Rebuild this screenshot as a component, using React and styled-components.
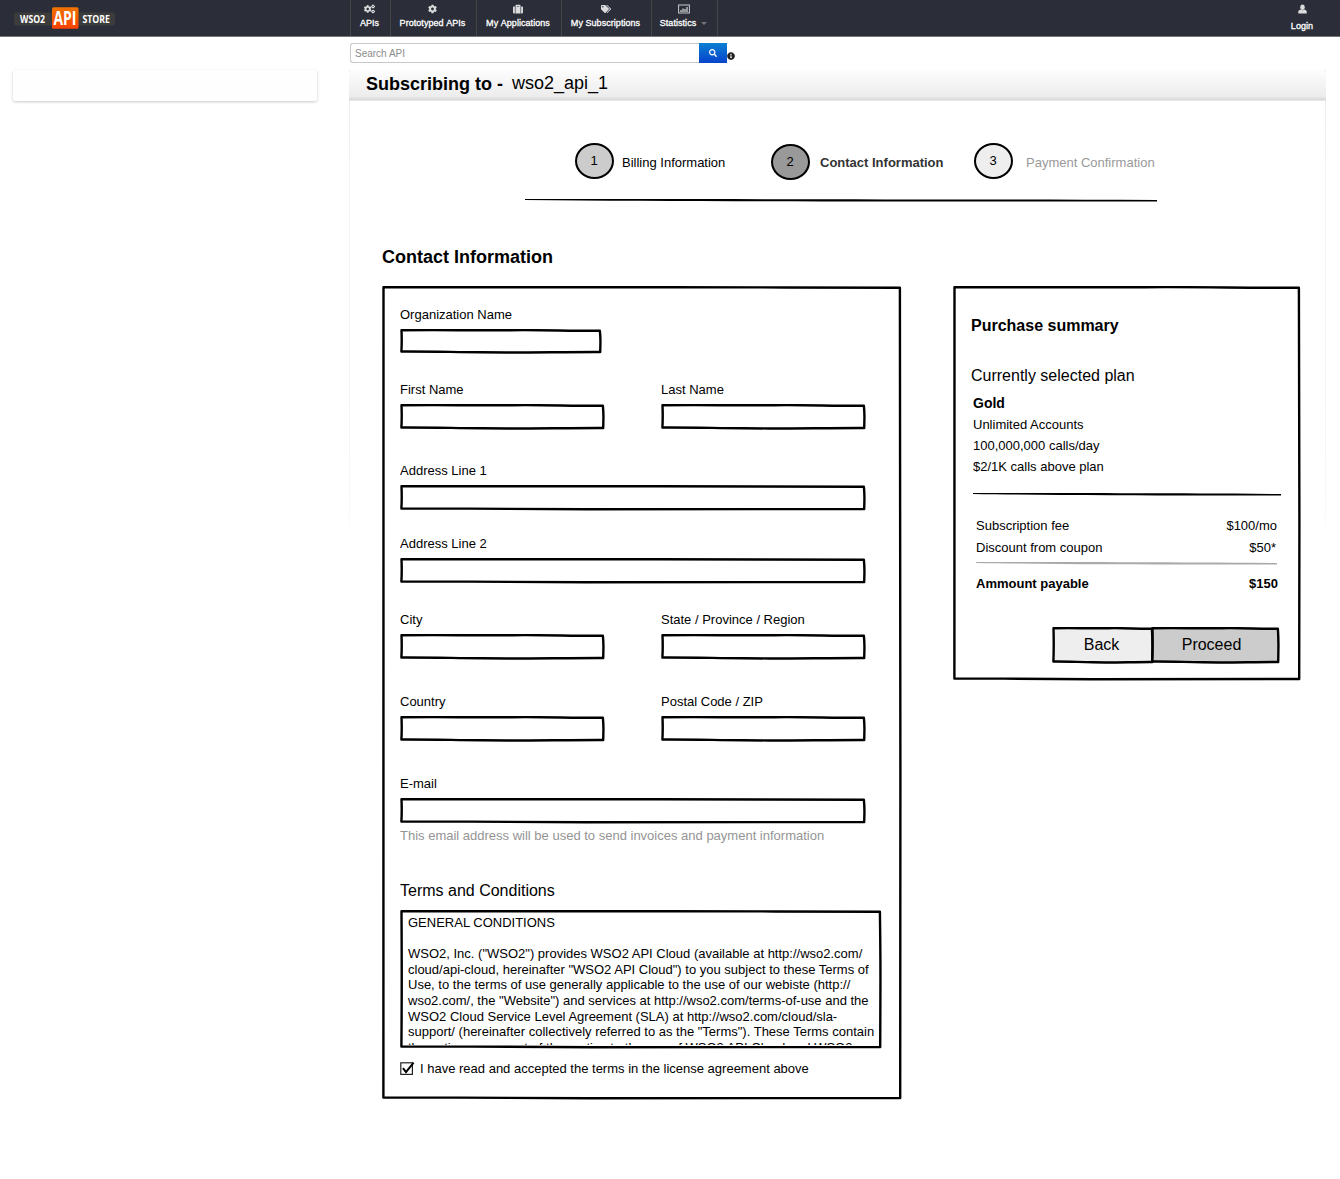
import React from "react";
import styled, { createGlobalStyle } from "styled-components";
import { FaCogs, FaCog, FaSuitcase, FaTags, FaSearch, FaInfoCircle } from "react-icons/fa";

const GlobalStyle = createGlobalStyle`
  * { box-sizing: border-box; }
  body {
    margin: 0;
    background: #fff;
    color: #000;
    font: 13px/16px "Liberation Sans", Arial, sans-serif;
  }
  p, h1, h2, h3 { margin: 0; font-weight: normal; }
`;

const Page = styled.div`
  width: 1340px;
  height: 1179px;
  overflow: hidden;
`;

/* ---------- header ---------- */

const Header = styled.header`
  display: flex;
  height: 37px;
  padding-left: 14px;
  background: #2b2e39;
  border-bottom: 1px solid #73757a;
  color: #fff;
`;

const LogoLink = styled.div`
  width: 336px;
  padding-top: 7px;
`;

const LogoSvg = styled.svg`
  display: block;
  overflow: visible;
  font-family: "Open Sans", "Noto Sans", sans-serif;
  font-weight: 700;
`;

const Nav = styled.nav`
  display: flex;
  flex: 1;
`;

const NavItem = styled.div`
  display: flex;
  flex-direction: column;
  align-items: center;
  width: ${(p) => p.$width}px;
  padding: 4px 2px 0 0;
  border-left: 1px solid ${(p) => (p.$plain ? "transparent" : "#454547")};
  color: #dcdcde;
  svg { height: 10px; }
`;

const NavLabel = styled.span`
  display: flex;
  align-items: center;
  gap: 5px;
  margin-top: ${(p) => p.$drop || 3}px;
  font-size: 9px;
  line-height: 12px;
  font-kerning: none;
  letter-spacing: 0.05px;
  white-space: nowrap;
  color: #fff;
  -webkit-text-stroke: 0.3px #fff;
`;

const Caret = styled.i`
  border: 3px solid transparent;
  border-top-color: #74767c;
  border-bottom: 0;
`;

/* ---------- body columns ---------- */

const Columns = styled.div`
  display: flex;
`;

const Sidebar = styled.aside`
  width: 349px;
  padding: 33px 0 0 13px;
`;

const EmptyCard = styled.div`
  width: 304px;
  height: 31px;
  border-radius: 2px;
  background: #fefefe;
  box-shadow: 0 1px 3px rgba(0, 0, 0, 0.22);
`;

const Main = styled.main`
  width: 977px;
  padding-top: 6px;
`;

const SearchBar = styled.div`
  display: flex;
  align-items: center;
  height: 20px;
  padding-left: 1px;
`;

const SearchInput = styled.input`
  width: 349px;
  height: 20px;
  padding: 0 4px;
  border: 1px solid #c8c8c8;
  border-right: 0;
  border-radius: 3px 0 0 3px;
  outline: 0;
  font: 10px "Liberation Sans", Arial, sans-serif;
  &::placeholder { color: #8c8c8c; opacity: 1; }
`;

const SearchButton = styled.button`
  display: flex;
  align-items: center;
  justify-content: center;
  width: 28px;
  height: 20px;
  padding: 0;
  border: 0;
  background: linear-gradient(#0a80d2, #0743cc);
  color: #fff;
`;

const InfoBadge = styled.span`
  display: flex;
  padding-top: 5px;
  color: #222;
`;

const Panel = styled.section`
  height: 1000px;
  margin-top: 7px;
  background:
    linear-gradient(#e9e9e9, #f3f3f3 20%, #f6f6f6 90%, #fff) 0 0 / 1px 475px no-repeat,
    linear-gradient(#e9e9e9, #f3f3f3 20%, #f6f6f6 90%, #fff) 100% 0 / 1px 475px no-repeat;
`;

const PanelTitle = styled.div`
  display: flex;
  align-items: baseline;
  height: 31px;
  padding: 3px 0 0 17px;
  border-radius: 3px 3px 0 0;
  background: linear-gradient(#fdfdfd, #ececec 85%, #dadada 94%, #e8e8e8);
`;

const Heading = styled.h1`
  font-size: 18px;
  line-height: 22px;
  font-weight: bold;
`;

const ApiName = styled.span`
  margin-left: 9px;
  font-size: 18px;
  line-height: 20px;
  position: relative;
  top: -1px;
`;

/* ---------- stepper ---------- */

const Steps = styled.div`
  display: flex;
  padding: 42px 0 0 226px;
  height: 98px;
`;

const Step = styled.div`
  display: flex;
  align-items: flex-start;
  width: ${(p) => p.$width}px;
  padding-top: ${(p) => p.$drop || 0}px;
`;

const StepCircle = styled.span`
  display: flex;
  align-items: center;
  justify-content: center;
  flex: none;
  width: 39px;
  height: 36px;
  padding-right: 1px;
  border: 2px solid #000;
  border-radius: 50%;
  background: ${(p) => p.$fill};
`;

const StepLabel = styled.span`
  margin: ${(p) => p.$top}px 0 0 ${(p) => p.$gap}px;
  color: ${(p) => p.$color};
  font-weight: ${(p) => (p.$bold ? "bold" : "normal")};
  white-space: nowrap;
`;

const StepRule = styled.div`
  padding-left: 176px;
  height: 3px;
`;

const SectionTitle = styled.h2`
  margin: 44px 0 0 33px;
  font-size: 18px;
  line-height: 22px;
  font-weight: bold;
`;

const Boards = styled.div`
  display: flex;
  align-items: flex-start;
  gap: 51px;
  padding: 18px 0 0 33px;
`;

/* ---------- hand drawn shapes ---------- */

const SketchBox = styled.div`
  position: relative;
  width: ${(p) => p.$w}px;
  height: ${(p) => p.$h}px;
`;

const Ink = styled.svg`
  position: absolute;
  inset: 0;
  pointer-events: none;
`;

const RuleSvg = styled.svg`
  display: block;
`;

function Outline({ w, h, fill = "none" }) {
  const d = [
    "M1.5 1.3",
    `C${w * 0.2} 0.9 ${w * 0.35} 1.5 ${w * 0.55} 1.2`,
    `S${w * 0.8} 1.9 ${w - 2.1} 1.8`,
    `Q${w - 1.4} ${h * 0.35} ${w - 1.6} ${h * 0.6}`,
    `L${w - 1.8} ${h - 2}`,
    `C${w * 0.8} ${h - 2.1} ${w * 0.6} ${h - 1.2} ${w * 0.4} ${h - 1.7}`,
    `S${w * 0.15} ${h - 2.6} 1.4 ${h - 2.5}`,
    `Q2 ${h * 0.5} 1.5 1.3Z`,
  ].join(" ");
  return (
    <Ink width={w} height={h} viewBox={`0 0 ${w} ${h}`}>
      <path d={d} fill={fill} stroke="#000" strokeWidth="2.4" strokeLinejoin="round" />
    </Ink>
  );
}

function Rule({ w, color = "#000" }) {
  return (
    <RuleSvg width={w} height="3" viewBox={`0 0 ${w} 3`}>
      <path
        d={`M0 0.1 C${w * 0.3} 0.1 ${w * 0.6} 0.2 ${w} 1 L${w} 2.4 C${w * 0.7} 2.6 ${w * 0.3} 2.6 0 0.9Z`}
        fill={color}
      />
    </RuleSvg>
  );
}

/* ---------- form ---------- */

const Form = styled.form`
  padding: 21px 0 0 18px;
`;

const Row = styled.div`
  display: flex;
  gap: 56px;
  margin-top: ${(p) => p.$gap || 0}px;
`;

const Label = styled.label`
  display: block;
`;

const Caption = styled.span`
  display: block;
  margin-bottom: 6px;
`;

const TextInput = styled.input`
  width: 100%;
  height: 100%;
  padding: 0 8px;
  border: 0;
  outline: 0;
  background: transparent;
  font: inherit;
`;

const Hint = styled.p`
  margin-top: 4px;
  color: #949494;
`;

const TermsTitle = styled.h3`
  margin: 37px 0 9px;
  font-size: 16px;
  line-height: 20px;
`;

const TermsText = styled.div`
  height: 135px;
  padding: 5px 0 0 8px;
  overflow: hidden;
  line-height: 15.6px;
  white-space: pre;
`;

const TermsLine = styled.div`
  height: 15.6px;
`;

const Agree = styled.label`
  display: flex;
  gap: 5px;
  margin-top: 12px;
`;

const Tick = styled.svg`
  width: 15px;
  height: 16px;
`;

function Field({ label, w = 205, h = 26 }) {
  return (
    <Label>
      <Caption>{label}</Caption>
      <SketchBox $w={w} $h={h}>
        <Outline w={w} h={h} />
        <TextInput aria-label={label} />
      </SketchBox>
    </Label>
  );
}

/* ---------- summary ---------- */

const Summary = styled.div`
  padding: 30px 20px 0 18px;
`;

const SummaryTitle = styled.h3`
  font-size: 16px;
  line-height: 20px;
  font-weight: ${(p) => (p.$bold ? "bold" : "normal")};
  margin-bottom: ${(p) => p.$below}px;
`;

const Plan = styled.div`
  padding-left: 2px;
  line-height: 21px;
  margin-bottom: 16px;
`;

const PlanName = styled.div`
  font-size: 14px;
  font-weight: bold;
`;

const RuleRow = styled.div`
  padding: ${(p) => p.$above || 0}px 0 0 ${(p) => p.$left}px;
`;

const Cost = styled.div`
  display: flex;
  justify-content: space-between;
  margin-top: ${(p) => p.$gap}px;
  padding: 0 ${(p) => p.$end}px 0 5px;
  font-weight: ${(p) => (p.$bold ? "bold" : "normal")};
`;

const Buttons = styled.div`
  display: flex;
  margin: 35px 0 0 81px;
`;

const ActionButton = styled.button`
  position: relative;
  width: 100%;
  height: 100%;
  padding: 0 ${(p) => p.$nudge}px 1px 0;
  border: 0;
  background: transparent;
  font: 16px "Liberation Sans", Arial, sans-serif;
  color: #000;
`;

const ProceedSlot = styled.div`
  margin-left: -3px;
`;

const NAV = [
  { label: "APIs", width: 40, icon: <FaCogs size={11} /> },
  { label: "Prototyped APIs", width: 86, icon: <FaCog size={9} /> },
  { label: "My Applications", width: 85, icon: <FaSuitcase size={10} /> },
  { label: "My Subscriptions", width: 90, icon: <FaTags size={10} /> },
  { label: "Statistics", width: 66, icon: <ChartIcon />, caret: true },
];

const TERMS = [
  "GENERAL CONDITIONS",
  "",
  'WSO2, Inc. ("WSO2") provides WSO2 API Cloud (available at http://wso2.com/',
  'cloud/api-cloud, hereinafter "WSO2 API Cloud") to you subject to these Terms of',
  "Use, to the terms of use generally applicable to the use of our webiste (http://",
  'wso2.com/, the "Website") and services at http://wso2.com/terms-of-use and the',
  "WSO2 Cloud Service Level Agreement (SLA) at http://wso2.com/cloud/sla-",
  'support/ (hereinafter collectively referred to as the "Terms"). These Terms contain',
  "the entire agreement of the parties to the use of WSO2 API Cloud and WSO2",
];

function ChartIcon() {
  return (
    <svg width="12" height="10" viewBox="0 0 12 10">
      <rect x="0.6" y="1" width="10.8" height="8" fill="none" stroke="#c9c9cc" />
      <path d="M3 8V6M5 8V4.5M7 8V5M9 8V3" stroke="#dcdcde" strokeWidth="1.2" />
    </svg>
  );
}

function UserIcon() {
  return (
    <svg width="9" height="10" viewBox="0 0 9 10">
      <ellipse cx="4.5" cy="3.2" rx="2.2" ry="2.7" fill="#dcdcde" />
      <path d="M0.3 9.4V7.3Q0.6 6 2.6 5.6Q4.5 7 6.4 5.6Q8.4 6 8.7 7.3V9.4Z" fill="#dcdcde" />
    </svg>
  );
}

function Logo() {
  return (
    <LogoSvg width="102" height="22" viewBox="0 0 102 22">
      <defs>
        <linearGradient id="flame" x1="0" y1="0" x2="0" y2="1">
          <stop offset="0" stopColor="#f07300" />
          <stop offset="1" stopColor="#fa4000" />
        </linearGradient>
      </defs>
      <rect x="0" y="5.5" width="101" height="13" rx="2.5" fill="#3d3c3c" />
      <rect x="38" y="0.3" width="26.5" height="21.5" rx="1.5" fill="url(#flame)" />
      <g fill="#fff">
        <text x="6" y="15.8" fontSize="10.5" textLength="25" lengthAdjust="spacingAndGlyphs">WSO2</text>
        <text x="39.5" y="17.9" fontSize="19" textLength="23" lengthAdjust="spacingAndGlyphs">API</text>
        <text x="68.5" y="15.8" fontSize="10.5" textLength="27.5" lengthAdjust="spacingAndGlyphs">STORE</text>
      </g>
    </LogoSvg>
  );
}

export default function App() {
  return (
    <Page>
      <GlobalStyle />
      <Header>
        <LogoLink><Logo /></LogoLink>
        <Nav>
          {NAV.map((item) => (
            <NavItem key={item.label} $width={item.width}>
              {item.icon}
              <NavLabel>{item.label}{item.caret && <Caret />}</NavLabel>
            </NavItem>
          ))}
          <NavItem $width={1} />
        </Nav>
        <NavItem $width={75} $plain>
          <UserIcon />
          <NavLabel $drop={6}>Login</NavLabel>
        </NavItem>
      </Header>

      <Columns>
        <Sidebar><EmptyCard /></Sidebar>
        <Main>
          <SearchBar>
            <SearchInput placeholder="Search API" />
            <SearchButton aria-label="Search"><FaSearch size={8} /></SearchButton>
            <InfoBadge><FaInfoCircle size={8} /></InfoBadge>
          </SearchBar>

          <Panel>
            <PanelTitle>
              <Heading>Subscribing to -</Heading>
              <ApiName>wso2_api_1</ApiName>
            </PanelTitle>

            <Steps>
              <Step $width={196}>
                <StepCircle $fill="#ccc">1</StepCircle>
                <StepLabel $top={12} $gap={8}>Billing Information</StepLabel>
              </Step>
              <Step $width={203} $drop={1}>
                <StepCircle $fill="#999">2</StepCircle>
                <StepLabel $top={11} $gap={10} $color="#333" $bold>Contact Information</StepLabel>
              </Step>
              <Step $width={190}>
                <StepCircle $fill="#eee">3</StepCircle>
                <StepLabel $top={12} $gap={13} $color="#999">Payment Confirmation</StepLabel>
              </Step>
            </Steps>
            <StepRule><Rule w={632} /></StepRule>

            <SectionTitle>Contact Information</SectionTitle>

            <Boards>
              <SketchBox $w={520} $h={814}>
                <Outline w={520} h={814} />
                <Form>
                  <Row><Field label="Organization Name" w={202} h={25} /></Row>
                  <Row $gap={28}>
                    <Field label="First Name" />
                    <Field label="Last Name" />
                  </Row>
                  <Row $gap={33}><Field label="Address Line 1" w={466} /></Row>
                  <Row $gap={25}><Field label="Address Line 2" w={466} /></Row>
                  <Row $gap={28}>
                    <Field label="City" />
                    <Field label="State / Province / Region" />
                  </Row>
                  <Row $gap={34}>
                    <Field label="Country" />
                    <Field label="Postal Code / ZIP" />
                  </Row>
                  <Row $gap={34}><Field label="E-mail" w={466} /></Row>
                  <Hint>This email address will be used to send invoices and payment information</Hint>

                  <TermsTitle>Terms and Conditions</TermsTitle>
                  <SketchBox $w={482} $h={139}>
                    <Outline w={482} h={139} />
                    <TermsText>
                      {TERMS.map((text, i) => (
                        <TermsLine key={i}>{text}</TermsLine>
                      ))}
                    </TermsText>
                  </SketchBox>
                  <Agree>
                    <Tick viewBox="0 0 15 16">
                      <rect x="0.8" y="1.8" width="11.6" height="11.6" fill="#fff" stroke="#222" strokeWidth="1.2" />
                      <path d="M3 7.2L6 11.2L13.6 1.6" fill="none" stroke="#000" strokeWidth="2" />
                    </Tick>
                    I have read and accepted the terms in the license agreement above
                  </Agree>
                </Form>
              </SketchBox>

              <SketchBox $w={348} $h={395}>
                <Outline w={348} h={395} />
                <Summary>
                  <SummaryTitle $bold $below={30}>Purchase summary</SummaryTitle>
                  <SummaryTitle $below={7}>Currently selected plan</SummaryTitle>
                  <Plan>
                    <PlanName>Gold</PlanName>
                    <div>Unlimited Accounts</div>
                    <div>100,000,000 calls/day</div>
                    <div>$2/1K calls above plan</div>
                  </Plan>
                  <RuleRow $left={2}><Rule w={308} /></RuleRow>
                  <Cost $gap={22} $end={4}><span>Subscription fee</span><span>$100/mo</span></Cost>
                  <Cost $gap={6} $end={5}><span>Discount from coupon</span><span>$50*</span></Cost>
                  <RuleRow $left={5} $above={6}><Rule w={301} color="#aaa" /></RuleRow>
                  <Cost $gap={11} $end={3} $bold><span>Ammount payable</span><span>$150</span></Cost>
                  <Buttons>
                    <SketchBox $w={102} $h={37}>
                      <Outline w={102} h={37} fill="#eee" />
                      <ActionButton $nudge={3}>Back</ActionButton>
                    </SketchBox>
                    <ProceedSlot>
                      <SketchBox $w={129} $h={37}>
                        <Outline w={129} h={37} fill="#ccc" />
                        <ActionButton $nudge={8}>Proceed</ActionButton>
                      </SketchBox>
                    </ProceedSlot>
                  </Buttons>
                </Summary>
              </SketchBox>
            </Boards>
          </Panel>
        </Main>
      </Columns>
    </Page>
  );
}
